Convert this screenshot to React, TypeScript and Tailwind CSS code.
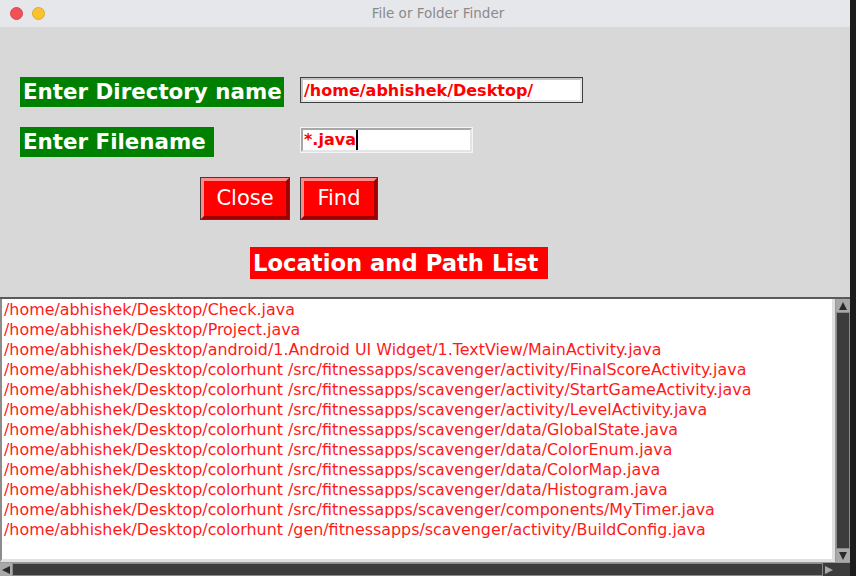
const FILES = [
  '/home/abhishek/Desktop/Check.java',
  '/home/abhishek/Desktop/Project.java',
  '/home/abhishek/Desktop/android/1.Android UI Widget/1.TextView/MainActivity.java',
  '/home/abhishek/Desktop/colorhunt /src/fitnessapps/scavenger/activity/FinalScoreActivity.java',
  '/home/abhishek/Desktop/colorhunt /src/fitnessapps/scavenger/activity/StartGameActivity.java',
  '/home/abhishek/Desktop/colorhunt /src/fitnessapps/scavenger/activity/LevelActivity.java',
  '/home/abhishek/Desktop/colorhunt /src/fitnessapps/scavenger/data/GlobalState.java',
  '/home/abhishek/Desktop/colorhunt /src/fitnessapps/scavenger/data/ColorEnum.java',
  '/home/abhishek/Desktop/colorhunt /src/fitnessapps/scavenger/data/ColorMap.java',
  '/home/abhishek/Desktop/colorhunt /src/fitnessapps/scavenger/data/Histogram.java',
  '/home/abhishek/Desktop/colorhunt /src/fitnessapps/scavenger/components/MyTimer.java',
  '/home/abhishek/Desktop/colorhunt /gen/fitnessapps/scavenger/activity/BuildConfig.java',
]

const font = { fontFamily: '"DejaVu Sans", Verdana, sans-serif' }

function Label({ text, className }: { text: string; className: string }) {
  return (
    <div className={`h-[30px] bg-[#008000] text-white font-bold text-[21.4px] leading-[30px] pl-[3px] whitespace-pre overflow-hidden ${className}`}>
      {text}
    </div>
  )
}

function Btn({ text, className }: { text: string; className: string }) {
  return (
    <div className={`h-[43px] border border-[#3c3c3c] ${className}`}>
      <div className="h-full border-t-[3px] border-l-[3px] border-b-[3px] border-r-[3px] border-t-[#ff8a8a] border-l-[#ff8a8a] border-b-[#a00000] border-r-[#a00000] bg-[#ff0000] flex items-center justify-center text-white text-[21px]">
        {text}
      </div>
    </div>
  )
}

export default function App() {
  return (
    <div className="w-[856px] h-[576px] flex overflow-hidden bg-[#1c1c1c]" style={font}>
      <div className="w-[850px] h-full flex flex-col bg-[#d8d8d8]">
        <div className="h-[27px] bg-[#e6e7ea] flex items-center relative shrink-0">
          <div className="flex gap-[9px] pl-[10px]">
            <span className="w-[13px] h-[13px] rounded-full bg-[#f25056] border border-[#e0444a]" />
            <span className="w-[13px] h-[13px] rounded-full bg-[#fcc22e] border border-[#e0a928]" />
          </div>
          <div className="absolute inset-0 flex items-center justify-center text-[13.5px] text-[#8a8a8a] pl-[26px]">
            File or Folder Finder
          </div>
        </div>

        <div className="h-[270px] shrink-0 pt-[50px] pl-[20px]">
          <div className="grid grid-cols-[280px_1fr] gap-y-[20px]">
            <Label text="Enter Directory name" className="w-[264px]" />
            <div className="w-[283px] h-[26px] border border-[#3f3f3f] bg-white">
              <div className="h-full border-[2px] border-[#c4c4c4] border-b-[#e8e8e8] border-r-[#e8e8e8] text-[#ff0000] font-bold text-[16px] leading-[21px] pl-[1px]">
                /home/abhishek/Desktop/
              </div>
            </div>
            <Label text="Enter Filename " className="w-[194px]" />
            <div className="w-[173px] h-[26px] border border-[#f4f4f4] bg-white">
              <div className="h-full border-[2px] border-[#a8a8a8] border-b-[#e4e4e4] border-r-[#e4e4e4] text-[#ff0000] font-bold text-[16px] leading-[20px] pl-[1px] flex items-center">
                *.java<span className="w-[2px] h-[20px] bg-black" />
              </div>
            </div>
          </div>
          <div className="flex gap-[10px] ml-[180px] mt-[20px]">
            <Btn text="Close" className="w-[90px]" />
            <Btn text="Find" className="w-[78px]" />
          </div>
          <div className="ml-[230px] mt-[27px] w-[298px] h-[32px] bg-[#ff0000] text-white font-bold text-[22.7px] leading-[32px] pl-[3px] whitespace-nowrap overflow-hidden">
            Location and Path List
          </div>
        </div>

        <div className="flex-1 flex flex-col border-t-2 border-[#5a5a5a] min-h-0">
          <div className="flex flex-1 min-h-0">
            <div className="flex-1 bg-white border-l-2 border-[#8c8c8c] border-b-[3px] border-b-[#e0e0e0] border-r-[3px] border-r-[#e0e0e0] pt-[1px] pl-[2px] overflow-hidden">
              {FILES.map((f) => (
                <div key={f} className="text-[15.9px] leading-[20px] text-[#ff1a1a] whitespace-nowrap">
                  {f}
                </div>
              ))}
            </div>
            <div className="w-[15px] flex flex-col bg-[#3c3c3c] border-l border-[#9a9a9a]">
              <div className="h-[13px] bg-[#a8a8a8] flex items-center justify-center">
                <svg width="10" height="10" viewBox="0 0 10 10"><path d="M5 1 L9 9 L1 9 Z" fill="#2a2a2a" /></svg>
              </div>
              <div className="flex-1 border border-[#8a8a8a] bg-[#3c3c3c]" />
              <div className="h-[13px] bg-[#a8a8a8] flex items-center justify-center">
                <svg width="10" height="10" viewBox="0 0 10 10"><path d="M1 1 L9 1 L5 9 Z" fill="#2a2a2a" /></svg>
              </div>
            </div>
          </div>
          <div className="h-[14px] flex bg-[#3c3c3c] border-t border-[#9a9a9a]">
            <div className="w-[12px] bg-[#a8a8a8] flex items-center justify-center">
              <svg width="10" height="10" viewBox="0 0 10 10"><path d="M9 1 L9 9 L1 5 Z" fill="#2a2a2a" /></svg>
            </div>
            <div className="flex-1 border border-[#8a8a8a]" />
            <div className="w-[12px] bg-[#3c3c3c] flex items-center justify-center">
              <svg width="10" height="10" viewBox="0 0 10 10"><path d="M1 1 L9 5 L1 9 Z" fill="#a8a8a8" /></svg>
            </div>
            <div className="w-[15px] bg-[#3c3c3c]" />
          </div>
        </div>
      </div>
      <div className="w-[6px] h-full bg-[#1c1c1c]" />
    </div>
  )
}
